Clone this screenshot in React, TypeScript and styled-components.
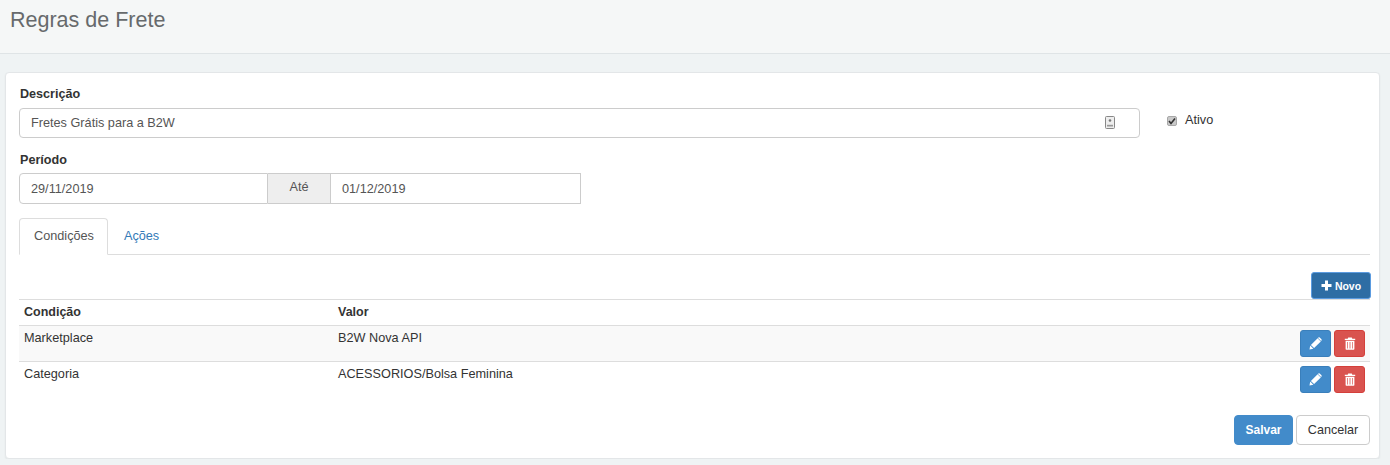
import React from "react";
import styled, { createGlobalStyle } from "styled-components";

const GlobalStyle = createGlobalStyle`
  html, body {
    margin: 0;
    padding: 0;
    background: #eff3f4;
    font-family: "Liberation Sans", Arial, sans-serif;
    font-size: 12.7px;
    color: #333;
  }
  * { box-sizing: border-box; }
`;

const PageHeader = styled.header`
  height: 54px;
  padding: 8px 10px 0;
  background: #f5f7f7;
  border-bottom: 1px solid #dfe4e6;
`;

const Title = styled.h1`
  margin: 0;
  font-size: 21.5px;
  line-height: 24px;
  font-weight: 400;
  color: #676a6c;
`;

const Card = styled.main`
  margin: 18px 10px 0 5px;
  height: 387px;
  padding: 13px 8px 0 13px;
  background: #fff;
  border: 1px solid #e3e6e8;
  border-radius: 4px;
  box-shadow: 0 1px 2px rgba(0, 0, 0, 0.06);
`;

const FormRow = styled.div`
  display: flex;
  align-items: flex-start;
`;

const Field = styled.div`
  width: 1121px;
`;

const Label = styled.label`
  display: block;
  height: 22px;
  padding: 1px 0 0 1px;
  font-weight: 700;
  font-size: 12.6px;
  line-height: 15px;
  color: #333;
`;

const InputBox = styled.div`
  position: relative;
  height: 30px;
  padding-left: 11px;
  border: 1px solid #ccc;
  border-radius: 4px;
  line-height: 28px;
  color: #555;
`;

const ContactBadge = styled.svg`
  position: absolute;
  right: 24px;
  top: 7px;
`;

const ActiveCheck = styled.div`
  display: flex;
  align-items: center;
  gap: 8px;
  margin: 26px 0 0 27px;
  line-height: 16px;
  color: #333;
`;

const CheckBox = styled.span`
  display: flex;
  align-items: center;
  justify-content: center;
  width: 10px;
  height: 10px;
  margin-top: 1px;
  background: #c9c9c9;
  border: 1px solid #a8a8a8;
  border-radius: 2px;
`;

const PeriodField = styled.div`
  margin-top: 14px;
`;

const DateGroup = styled.div`
  display: flex;
  width: 562px;
  height: 31px;
  margin-top: -1px;
  color: #555;
`;

const DateInput = styled.div<{ $side: "left" | "right" }>`
  width: ${(p) => (p.$side === "left" ? "249px" : "251px")};
  padding: 1px 0 0 11px;
  line-height: 28px;
  border: 1px solid #ccc;
  border-radius: ${(p) => (p.$side === "left" ? "4px 0 0 4px" : "0")};
`;

const DateAddon = styled.div`
  width: 62px;
  text-align: center;
  background: #eee;
  border-top: 1px solid #ccc;
  border-bottom: 1px solid #ccc;
  color: #555;
  line-height: 27px;
`;

const Tabs = styled.nav`
  display: flex;
  width: 1351px;
  height: 37px;
  margin-top: 14px;
  border-bottom: 1px solid #ddd;
`;

const Tab = styled.a<{ $active?: boolean }>`
  height: 37px;
  margin-right: 1px;
  padding: 10px 13px 0 14px;
  line-height: 15px;
  border: 1px solid ${(p) => (p.$active ? "#ddd" : "transparent")};
  border-bottom-color: ${(p) => (p.$active ? "#fff" : "transparent")};
  border-radius: 4px 4px 0 0;
  background: ${(p) => (p.$active ? "#fff" : "transparent")};
  color: ${(p) => (p.$active ? "#555" : "#337ab7")};
`;

const TableToolbar = styled.div`
  display: flex;
  justify-content: flex-end;
  width: 1352px;
  margin-top: 17px;
`;

const NewButton = styled.button`
  display: flex;
  align-items: center;
  justify-content: center;
  gap: 3px;
  width: 60px;
  height: 27px;
  padding: 0;
  font: 700 10.5px "Liberation Sans", Arial, sans-serif;
  color: #fff;
  background: #2e6da4;
  border: 1px solid #5b9be0;
  border-radius: 3px;
`;

const Table = styled.div`
  width: 1351px;
`;

const Row = styled.div<{ $striped?: boolean; $head?: boolean }>`
  display: grid;
  grid-template-columns: 314px 1fr auto;
  height: ${(p) => (p.$head ? "27px" : "36px")};
  padding: 4px 5px 0;
  border-top: 1px solid #ddd;
  background: ${(p) => (p.$striped ? "#f9f9f9" : "#fff")};
  font-weight: ${(p) => (p.$head ? 700 : 400)};
  font-size: ${(p) => (p.$head ? "12.5px" : "12.7px")};
  line-height: 17px;
  margin-bottom: ${(p) => (p.$head ? "-1px" : "0")};
`;

const Actions = styled.div`
  display: flex;
  gap: 3px;
`;

const IconButton = styled.button<{ $variant: "edit" | "remove" }>`
  display: flex;
  align-items: center;
  justify-content: center;
  width: 31px;
  height: 27px;
  padding: 0;
  border: 1px solid ${(p) => (p.$variant === "edit" ? "#3a7fbb" : "#d43f3a")};
  border-radius: 3px;
  background: ${(p) => (p.$variant === "edit" ? "#428bca" : "#d9534f")};
`;

const Footer = styled.div`
  display: flex;
  justify-content: flex-end;
  gap: 3px;
  width: 1351px;
  margin-top: 18px;
`;

const FormButton = styled.button<{ $primary?: boolean }>`
  height: 30px;
  padding: 0;
  width: ${(p) => (p.$primary ? "59px" : "74px")};
  font: ${(p) => (p.$primary ? 700 : 400)} ${(p) => (p.$primary ? "12px" : "12.6px")} "Liberation Sans", Arial, sans-serif;
  color: ${(p) => (p.$primary ? "#fff" : "#333")};
  background: ${(p) => (p.$primary ? "#428bca" : "#fff")};
  border: 1px solid ${(p) => (p.$primary ? "#428bca" : "#ccc")};
  border-radius: 4px;
`;

const PencilIcon = () => (
  <svg width="13" height="13" viewBox="0 0 13 13" fill="#fff">
    <path d="M0.5 12.5 L1.2 8.6 L4.4 11.8 Z" />
    <path d="M1.9 7.9 L8.6 1.2 L11.8 4.4 L5.1 11.1 Z" />
    <path d="M9.3 0.6 Q10 0 10.7 0.5 L12.5 2.3 Q13 3 12.4 3.7 L12.1 4 L9 0.9 Z" />
  </svg>
);

const TrashIcon = () => (
  <svg width="12" height="13" viewBox="0 0 12 13" fill="#fff">
    <path d="M4.2 0.5 H7.8 L8.3 1.8 H11.2 V3 H0.8 V1.8 H3.7 Z" />
    <path d="M1.6 3.8 H10.4 V12 Q10.4 12.7 9.7 12.7 H2.3 Q1.6 12.7 1.6 12 Z M3.3 5 V11.5 H4 V5 Z M5.6 5 V11.5 H6.4 V5 Z M8 5 V11.5 H8.7 V5 Z" fillRule="evenodd" />
  </svg>
);

const PlusIcon = () => (
  <svg width="11" height="11" viewBox="0 0 11 11" fill="#fff">
    <path d="M4 0.5 H7 V4 H10.5 V7 H7 V10.5 H4 V7 H0.5 V4 H4 Z" />
  </svg>
);

const rows = [
  { condition: "Marketplace", value: "B2W Nova API" },
  { condition: "Categoria", value: "ACESSORIOS/Bolsa Feminina" },
];

export default function App() {
  return (
    <>
      <GlobalStyle />
      <PageHeader>
        <Title>Regras de Frete</Title>
      </PageHeader>
      <Card>
        <FormRow>
          <Field>
            <Label>Descrição</Label>
            <InputBox>
              Fretes Grátis para a B2W
              <ContactBadge width="10" height="13" viewBox="0 0 10 13">
                <rect x="0.5" y="0.5" width="9" height="12" rx="1" fill="#eee" stroke="#888" />
                <circle cx="5" cy="4.5" r="1.3" fill="#777" />
                <path d="M2 10.5 V8.8 H8 V10.5 Z" fill="#999" />
              </ContactBadge>
            </InputBox>
          </Field>
          <ActiveCheck>
            <CheckBox>
              <svg width="8" height="8" viewBox="0 0 8 8">
                <path d="M1 4 L3 6.5 L7 1.5" fill="none" stroke="#333" strokeWidth="1.6" />
              </svg>
            </CheckBox>
            Ativo
          </ActiveCheck>
        </FormRow>
        <PeriodField>
          <Label>Período</Label>
          <DateGroup>
            <DateInput $side="left">29/11/2019</DateInput>
            <DateAddon>Até</DateAddon>
            <DateInput $side="right">01/12/2019</DateInput>
          </DateGroup>
        </PeriodField>
        <Tabs>
          <Tab $active>Condições</Tab>
          <Tab>Ações</Tab>
        </Tabs>
        <TableToolbar>
          <NewButton>
            <PlusIcon />
            Novo
          </NewButton>
        </TableToolbar>
        <Table>
          <Row $head>
            <span>Condição</span>
            <span>Valor</span>
          </Row>
          {rows.map((row, i) => (
            <Row key={row.condition} $striped={i === 0}>
              <span>{row.condition}</span>
              <span>{row.value}</span>
              <Actions>
                <IconButton $variant="edit">
                  <PencilIcon />
                </IconButton>
                <IconButton $variant="remove">
                  <TrashIcon />
                </IconButton>
              </Actions>
            </Row>
          ))}
        </Table>
        <Footer>
          <FormButton $primary>Salvar</FormButton>
          <FormButton>Cancelar</FormButton>
        </Footer>
      </Card>
    </>
  );
}
